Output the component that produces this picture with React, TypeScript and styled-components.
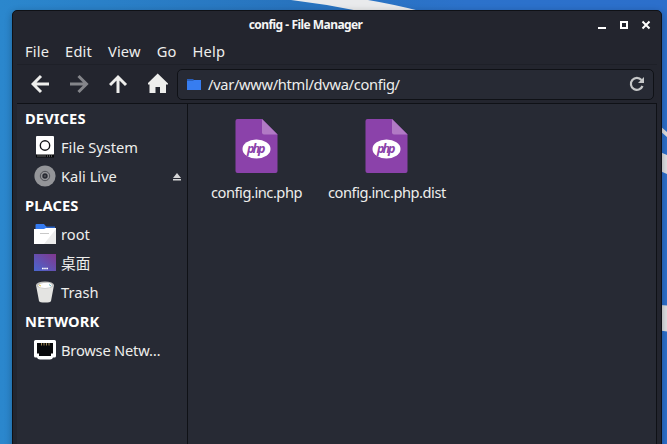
import React from "react";
import styled, { createGlobalStyle } from "styled-components";

const Global = createGlobalStyle`
  * { box-sizing: border-box; }
  html, body { margin: 0; padding: 0; overflow: hidden; }
`;
const Desktop = styled.main`
  position: relative;
  width: 667px;
  height: 444px;
  overflow: hidden;
  padding: 10px 5px 0 12px;
  background: linear-gradient(90deg, #2b87cd 0%, #2873be 45%, #2c72cb 70%, #2c6fcb 100%);
  font-family: "Noto Sans", "Noto Sans CJK SC", sans-serif;
  font-size: 14.67px;
  color: #eeeeec;
`;
const Wallpaper = styled.svg`
  position: absolute;
  inset: 0;
`;
const Window = styled.section`
  position: relative;
  width: 650px;
  height: 440px;
  display: flex;
  flex-direction: column;
  background: #23252e;
  border: 1px solid #0f1116;
  border-radius: 5px 5px 0 0;
  box-shadow: 0 2px 7px rgba(0, 0, 0, 0.3);
`;
const TitleBar = styled.header`
  height: 27px;
  display: grid;
  grid-template-columns: 1fr 88px;
  align-items: center;
  padding: 0 10px 0 0;
`;
const Title = styled.h1`
  margin: 0 0 0 35px;
  text-align: center;
  font-size: 12px;
  line-height: 26px;
  font-weight: 700;
  letter-spacing: -0.58px;
  word-spacing: 0.3px;
  white-space: nowrap;
  color: #f5f5f5;
`;
const Controls = styled.div`
  display: flex;
  justify-content: flex-end;
  gap: 12px;
`;
const MenuBar = styled.nav`
  height: 27px;
  margin: 0 4px;
  padding: 0 8px;
  display: flex;
  gap: 16px;
  line-height: 27px;
  letter-spacing: 0.16px;
  border-bottom: 1px solid #1e2028;
`;
const ToolBar = styled.div`
  height: 38px;
  padding: 0 7px 0 18px;
  display: flex;
  align-items: center;
`;
const NavButton = styled.span<{ $dim?: boolean }>`
  width: 39px;
  height: 22px;
  flex: none;
  color: ${(p) => (p.$dim ? "#84858a" : "#eeeeec")};
  svg { display: block; }
`;
const PathBar = styled.div`
  flex: 1;
  height: 31px;
  margin-left: -10px;
  display: flex;
  align-items: center;
  padding: 0 8px 0 9px;
  background: #272a34;
  border: 1px solid #0f1116;
  border-radius: 5px;
`;
const PathText = styled.span`
  flex: 1;
  margin-left: 6px;
  letter-spacing: -0.31px;
`;
const Body = styled.div`
  flex: 1;
  display: flex;
  margin: 0 4px;
  background: #272a34;
  border: 1px solid #0f1116;
  border-width: 1px 1px 0 0;
`;
const Sidebar = styled.aside`
  width: 171px;
  border-right: 1px solid #0f1116;
`;
const Heading = styled.h2`
  height: 29px;
  margin: 0;
  padding-left: 8px;
  font-size: 14.67px;
  line-height: 29px;
  font-weight: 700;
  letter-spacing: 0.1px;
  color: #fff;
`;
const Place = styled.div`
  height: 29px;
  padding: 0 6px 0 17px;
  display: flex;
  align-items: center;
  line-height: 29px;
  white-space: nowrap;
  svg { flex: none; }
  svg:first-child { margin-bottom: 1px; }
`;
const PlaceName = styled.span<{ $tight?: boolean }>`
  flex: 1;
  margin-left: 5px;
  letter-spacing: ${(p) => (p.$tight ? "-0.2px" : "0")};
`;
const Files = styled.div`
  display: flex;
  align-items: flex-start;
  padding: 15px 0 0 23px;
  gap: 26px;
`;
const File = styled.figure`
  margin: 0;
  display: flex;
  flex-direction: column;
  align-items: center;
`;
const FileName = styled.figcaption`
  margin-top: 8px;
  line-height: 22px;
  letter-spacing: -0.47px;
`;

const DriveIcon = () => (
  <svg width="22" height="22" viewBox="0 0 22 22">
    <rect x="2" y="0" width="18" height="19" rx="1" fill="#fff" />
    <circle cx="11" cy="9.5" r="4.7" fill="none" stroke="#15161a" strokeWidth="1.4" />
    <rect x="2" y="18.5" width="18" height="3" fill="#050608" />
    <path d="M3 20h9" stroke="#666" strokeWidth="1" />
    <path d="M13 20h1M15 20h1M17 20h1" stroke="#999" strokeWidth="1" />
  </svg>
);
const DiscIcon = () => (
  <svg width="22" height="22" viewBox="0 0 22 22">
    <circle cx="11" cy="11" r="10.6" fill="#949599" />
    <circle cx="11" cy="11" r="4.7" fill="none" stroke="#505158" strokeWidth="1" />
    <circle cx="11" cy="11" r="2.7" fill="#292b34" />
    <circle cx="11" cy="11" r="0.8" fill="#777" />
  </svg>
);
const HomeFolderIcon = () => (
  <svg width="22" height="22" viewBox="0 0 22 22">
    <path d="M11 3.500h10V7H11z" fill="#2862c7" />
    <path d="M1.500 2q0-1 1-1h7.500l2.500 3v4h-11z" fill="#347af0" />
    <path d="M0 6h10l2-1h10v16H0z" fill="#fff" />
    <path d="M22 6v15H10z" fill="#ececec" />
    <path d="M6 10.500h9" stroke="#c8c8c8" />
  </svg>
);
const DesktopIcon = () => (
  <svg width="22" height="22" viewBox="0 0 22 22">
    <defs>
      <linearGradient id="desk" x1="0" y1="1" x2="1" y2="0">
        <stop offset="0" stopColor="#4967cf" />
        <stop offset="1" stopColor="#81378d" />
      </linearGradient>
    </defs>
    <rect y="2" width="22" height="17" fill="url(#desk)" />
    <path d="M8 16.500h1.700M10.200 16.500h1.600M12.300 16.500h1.700" stroke="#fff" strokeWidth="1.500" />
  </svg>
);
const TrashIcon = () => (
  <svg width="22" height="22" viewBox="0 0 22 22">
    <path d="M2 4l3 16q.5 1.500 6 1.500t6-1.500l3-16z" fill="#e4e4e2" />
    <ellipse cx="11" cy="4" rx="9" ry="3.500" fill="#c2c2c0" />
    <path d="M4 4.500q2-3 7-2.500 6-1 7 2.500-1 2.500-7 2.500T4 4.500" fill="#fff" />
    <path d="M5 4l2 1" stroke="#e5c84d" />
    <path d="M15 3.500l2 1.500" stroke="#65b9bd" />
  </svg>
);
const NetworkIcon = () => (
  <svg width="22" height="22" viewBox="0 0 22 22">
    <path d="M1.500 1h19q1.500 0 1.500 1.500V17q0 1.500-1.500 1.500H19q-.500 2-3 2H6q-2.500 0-3-2H1.500Q0 18.500 0 17V2.500Q0 1 1.500 1z" fill="#fff" />
    <path d="M3 4h16v10.500h-2V17H5v-2.500H3z" fill="#08090b" />
    <path d="M7.500 4v2.500M10 4v2.500M12.500 4v2.500M15 4v2.500" stroke="#a08855" />
  </svg>
);
const EjectIcon = () => (
  <svg width="8" height="8" viewBox="0 0 8 8" fill="#d5d5d6">
    <path d="M4 0l4 5H0zM0 6h8v1.500H0z" />
  </svg>
);
const PhpIcon = () => (
  <svg width="44" height="54" viewBox="0 0 44 54">
    <path d="M2.500 0H27L42.500 15.500V52q0 2-2 2h-38q-2 0-2-2V2q0-2 2-2z" fill="#8b42aa" />
    <path d="M27 0l15.500 15.500H29q-2 0-2-2z" fill="#b17ac5" />
    <ellipse cx="21.500" cy="30" rx="14" ry="9.500" fill="#fff" />
    <text x="21.300" y="33.500" textAnchor="middle" textLength="18.500" lengthAdjust="spacing" fontFamily="Open Sans, Noto Sans, sans-serif" fontSize="12.500" fontWeight="700" fontStyle="italic" fill="#8b42aa">php</text>
  </svg>
);

type PlaceItem = { name: string; icon: React.ReactNode; ejectable?: boolean; tight?: boolean };
const places: { heading: string; items: PlaceItem[] }[] = [
  { heading: "DEVICES", items: [
    { name: "File System", icon: <DriveIcon /> },
    { name: "Kali Live", icon: <DiscIcon />, ejectable: true },
  ] },
  { heading: "PLACES", items: [
    { name: "root", icon: <HomeFolderIcon /> },
    { name: "桌面", icon: <DesktopIcon /> },
    { name: "Trash", icon: <TrashIcon /> },
  ] },
  { heading: "NETWORK", items: [{ name: "Browse Netw…", icon: <NetworkIcon />, tight: true }] },
];

export default function App() {
  return (
    <Desktop>
      <Global />
      <Wallpaper width="667" height="444">
        <path d="M291 0h77Q392 4 420 11h-61Q325 4 291 0z" fill="#e9eaec" />
        <path d="M660 126l7 6v5l-7-6zM660 152l7 3v19l-7-3zM660 305l7 .500v26l-7-1z" fill="#dedfe2" />
      </Wallpaper>
      <Window>
        <TitleBar>
          <Title>config - File Manager</Title>
          <Controls>
            <svg width="10" height="10"><path d="M1 8h8" stroke="#fff" strokeWidth="2" /></svg>
            <svg width="10" height="10"><path d="M2 2h6v6H2z" stroke="#fff" strokeWidth="2" fill="none" /></svg>
            <svg width="10" height="10"><path d="M1.500 1.500l7 7M8.500 1.500l-7 7" stroke="#fff" strokeWidth="2" /></svg>
          </Controls>
        </TitleBar>
        <MenuBar>
          {["File", "Edit", "View", "Go", "Help"].map((m) => <span key={m}>{m}</span>)}
        </MenuBar>
        <ToolBar>
          <NavButton>
            <svg width="22" height="22" fill="none" stroke="currentColor" strokeWidth="3"><path d="M18 11H2M10 3l-8 8 8 8" /></svg>
          </NavButton>
          <NavButton $dim>
            <svg width="22" height="22" fill="none" stroke="currentColor" strokeWidth="3"><path d="M0 11h16M8.500 3l8 8-8 8" /></svg>
          </NavButton>
          <NavButton>
            <svg width="22" height="22" fill="none" stroke="currentColor" strokeWidth="3"><path d="M9 20V4M1 12l8-8 8 8" /></svg>
          </NavButton>
          <NavButton>
            <svg width="22" height="22" fill="currentColor"><path d="M9.700 .500L20 10.500v1h-2V20h-6v-6H7.500v6H1.500v-8.500H-.500v-1z" /></svg>
          </NavButton>
          <PathBar>
            <svg width="15" height="11"><path d="M0 0h6l1 1h7v4H0z" fill="#285fbd" /><path d="M0 2h6l1-1h7v10H0z" fill="#377df0" /></svg>
            <PathText>/var/www/html/dvwa/config/</PathText>
            <svg width="16" height="16" fill="none" stroke="#c6c7c8" strokeWidth="2.200"><path d="M13.500 10A6 6 0 1 1 12.500 4" /><path d="M15 1v6H9z" fill="#c6c7c8" stroke="none" /></svg>
          </PathBar>
        </ToolBar>
        <Body>
          <Sidebar>
            {places.map((g) => (
              <React.Fragment key={g.heading}>
                <Heading>{g.heading}</Heading>
                {g.items.map((p) => (
                  <Place key={p.name}>{p.icon}<PlaceName $tight={p.tight}>{p.name}</PlaceName>{p.ejectable && <EjectIcon />}</Place>
                ))}
              </React.Fragment>
            ))}
          </Sidebar>
          <Files>
            {["config.inc.php", "config.inc.php.dist"].map((f) => (
              <File key={f}><PhpIcon /><FileName>{f}</FileName></File>
            ))}
          </Files>
        </Body>
      </Window>
    </Desktop>
  );
}
